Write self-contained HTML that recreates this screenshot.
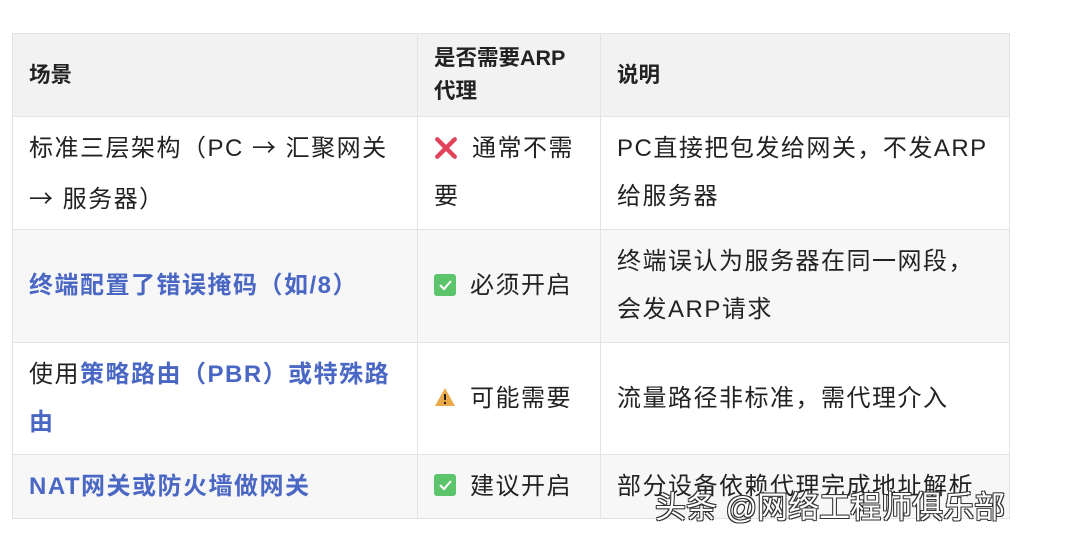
<!DOCTYPE html>
<html><head><meta charset="utf-8"><style>
html,body{margin:0;padding:0;background:#fff;width:1065px;height:551px;overflow:hidden}
body{font-family:"Liberation Sans","Noto Sans CJK SC",sans-serif;color:#222}
table{position:absolute;left:12px;top:33px;border-collapse:collapse;width:998px}
td,th{border:1px solid #e3e3e3;padding:0 0 0 16px;text-align:left;vertical-align:middle;font-size:24px;letter-spacing:1.5px;line-height:48px}
th{background:#f2f2f2;font-size:21.5px;font-weight:bold;line-height:33px;letter-spacing:0;height:82px}
tr.g td{background:#f7f7f7}
.b{color:#4a67c4;font-weight:bold}
.ar{font-family:"Noto Sans CJK SC",sans-serif}
.ic{display:inline-block;vertical-align:middle;margin-right:14px;position:relative;top:-2px}
.wm{position:absolute;left:655px;top:482px;font-size:31px;color:#fff;letter-spacing:0;
text-shadow:-1px -1px 0 #333,1px -1px 0 #333,-1px 1px 0 #333,1px 1px 0 #333;white-space:nowrap}
</style></head><body>
<table>
<colgroup><col style="width:405px"><col style="width:183px"><col></colgroup>
<tr><th>场景</th><th>是否需要ARP<br>代理</th><th>说明</th></tr>
<tr style="height:113px"><td>标准三层架构（PC <span class="ar">→</span> 汇聚网关<br><span class="ar">→</span> 服务器）</td>
<td><svg class="ic" width="24" height="24" viewBox="0 0 22 22"><path d="M3 3L19 19M19 3L3 19" stroke="#e0435a" stroke-width="4" stroke-linecap="round"/></svg>通常不需<br>要</td>
<td>PC直接把包发给网关，不发ARP<br>给服务器</td></tr>
<tr class="g" style="height:113px"><td class="b">终端配置了错误掩码（如/8）</td>
<td><svg class="ic" width="22" height="22" viewBox="0 0 22 22"><rect width="22" height="22" rx="3" fill="#5cc46a"/><path d="M6 11l4 4 7-8" stroke="#fff" stroke-width="2" fill="none"/></svg>必须开启</td>
<td>终端误认为服务器在同一网段，<br>会发ARP请求</td></tr>
<tr style="height:112px"><td>使用<span class="b">策略路由（PBR）或特殊路<br>由</span></td>
<td><svg class="ic" width="22" height="22" viewBox="0 0 22 22"><path d="M11 2L21 20H1Z" fill="#eaaa4a"/><path d="M11 8v6" stroke="#222" stroke-width="2"/><circle cx="11" cy="17" r="1.2" fill="#222"/></svg>可能需要</td>
<td>流量路径非标准，需代理介入</td></tr>
<tr class="g" style="height:64px"><td class="b">NAT网关或防火墙做网关</td>
<td><svg class="ic" width="22" height="22" viewBox="0 0 22 22"><rect width="22" height="22" rx="3" fill="#5cc46a"/><path d="M6 11l4 4 7-8" stroke="#fff" stroke-width="2" fill="none"/></svg>建议开启</td>
<td>部分设备依赖代理完成地址解析</td></tr>
</table>
<div class="wm">头条 @网络工程师俱乐部</div>
</body></html>
